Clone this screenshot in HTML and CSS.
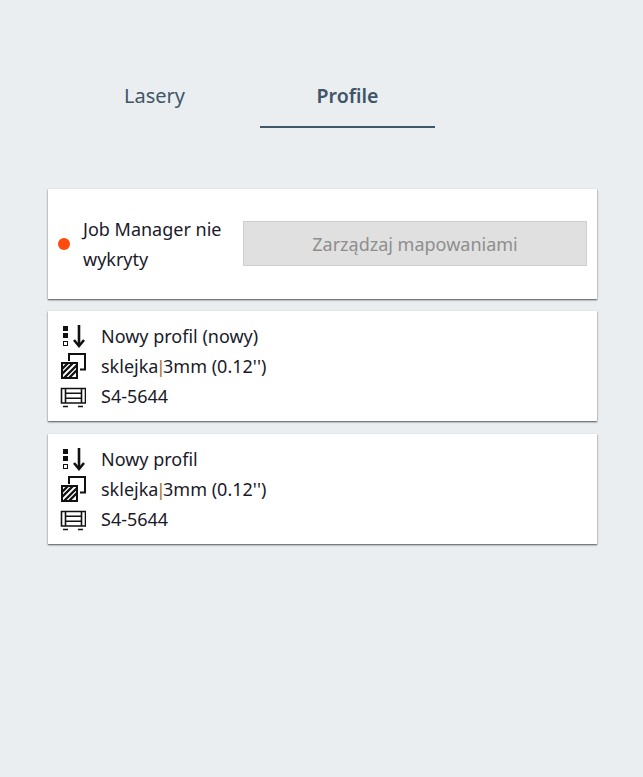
FILE: index.html
```html
<!DOCTYPE html>
<html lang="pl">
<head>
<meta charset="utf-8">
<title>Profile</title>
<link rel="stylesheet" href="styles.css">
</head>
<body>
<main class="page">
  <nav class="tabs">
    <div class="tab">Lasery</div>
    <div class="tab tab-active">Profile</div>
  </nav>
  <section class="card status">
    <span class="dot"></span>
    <span class="status-text">Job Manager nie wykryty</span>
    <button class="manage" disabled>Zarządzaj mapowaniami</button>
  </section>
  <section class="card profile">
    <div class="row">
      <svg class="icon" viewBox="0 0 26 26"><use href="#i-sort"/></svg>
      <span>Nowy profil (nowy)</span>
    </div>
    <div class="row">
      <svg class="icon" viewBox="0 0 26 26"><use href="#i-material"/></svg>
      <span>sklejka<span class="sep">|</span>3mm (0.12'')</span>
    </div>
    <div class="row">
      <svg class="icon" viewBox="0 0 26 26"><use href="#i-machine"/></svg>
      <span>S4-5644</span>
    </div>
  </section>
  <section class="card profile">
    <div class="row">
      <svg class="icon" viewBox="0 0 26 26"><use href="#i-sort"/></svg>
      <span>Nowy profil</span>
    </div>
    <div class="row">
      <svg class="icon" viewBox="0 0 26 26"><use href="#i-material"/></svg>
      <span>sklejka<span class="sep">|</span>3mm (0.12'')</span>
    </div>
    <div class="row">
      <svg class="icon" viewBox="0 0 26 26"><use href="#i-machine"/></svg>
      <span>S4-5644</span>
    </div>
  </section>
</main>
<svg class="defs" width="0" height="0">
  <defs>
    <symbol id="i-sort" viewBox="0 0 26 26">
      <rect x="3" y="3" width="5" height="5" fill="#111"/>
      <rect x="3" y="10" width="5" height="5" fill="#111"/>
      <rect x="3.500" y="18.500" width="4" height="4" fill="none" stroke="#111"/>
      <path d="M19 2V23" fill="none" stroke="#111" stroke-width="2.600"/>
      <path d="M14 17L19 23L24 17" fill="none" stroke="#111" stroke-width="2.600"/>
    </symbol>
    <symbol id="i-material" viewBox="0 0 26 26">
      <path d="M9 8V1H25V16.500H20" fill="none" stroke="#111" stroke-width="2"/>
      <rect x="2" y="10" width="15" height="15" fill="#fff" stroke="#111" stroke-width="2"/>
      <path d="M2 16L8 10M2 21L13 10M4 25L17 12M9 25L17 17" stroke="#111" stroke-width="2.400"/>
    </symbol>
    <symbol id="i-machine" viewBox="0 0 26 26">
      <path d="M1.500 5.500H25.500V20H1.500ZM5.500 5.500V20M21.500 5.500V20M5.500 10.300H21.500M5.500 15.200H21.500" fill="none" stroke="#111" stroke-width="1.600"/>
      <path d="M3 23.500H8M18 23.500H23" stroke="#111" stroke-width="1.600"/>
    </symbol>
  </defs>
</svg>
</body>
</html>
```
FILE: styles.css
```css
* { box-sizing: border-box; }
html, body { margin: 0; height: 100%; }
body {
  background: #eaeef1;
  color: #1a1a2a;
  font-family: "Noto Sans", "Lato", sans-serif;
  font-size: 18px;
}
.page {
  padding: 65px 46px 0 48px;
}
.tabs {
  display: flex;
  justify-content: flex-start;
  gap: 18px;
  margin: 0 0 61px 19px;
}
.tab {
  width: 175px;
  height: 63px;
  padding-top: 15px;
  text-align: center;
  font-size: 20px;
  line-height: 32px;
  color: #3f5568;
}
.tab-active {
  font-size: 19.5px;
  font-weight: 600;
  border-bottom: 2px solid #3f5568;
}
.card {
  background: #fff;
  height: 110px;
  box-shadow: 0 1px 2px rgba(0, 0, 0, .45), 0 1px 1px rgba(0, 0, 0, .25);
}
.status {
  display: flex;
  align-items: center;
  padding: 0 10px;
  margin-bottom: 12px;
}
.dot {
  flex: none;
  width: 12px;
  height: 12px;
  border-radius: 50%;
  background: #ff4a0d;
}
.status-text {
  flex: none;
  width: 160px;
  margin-left: 13px;
  line-height: 30px;
}
.manage {
  flex: none;
  width: 344px;
  height: 45px;
  margin-top: -1px;
  background: #e0e0e0;
  border: 1px solid #cfcfcf;
  color: #8e8e8e;
  font: inherit;
  font-size: 18px;
}
.profile {
  padding: 10px 0 0 12px;
  margin-bottom: 13px;
}
.row {
  display: flex;
  align-items: center;
  height: 30px;
  gap: 15px;
}
.icon {
  flex: none;
  width: 26px;
  height: 26px;
}
.sep {
  font-family: "Liberation Sans", sans-serif;
  color: #b07a30;
}
.defs { position: absolute; }
```
